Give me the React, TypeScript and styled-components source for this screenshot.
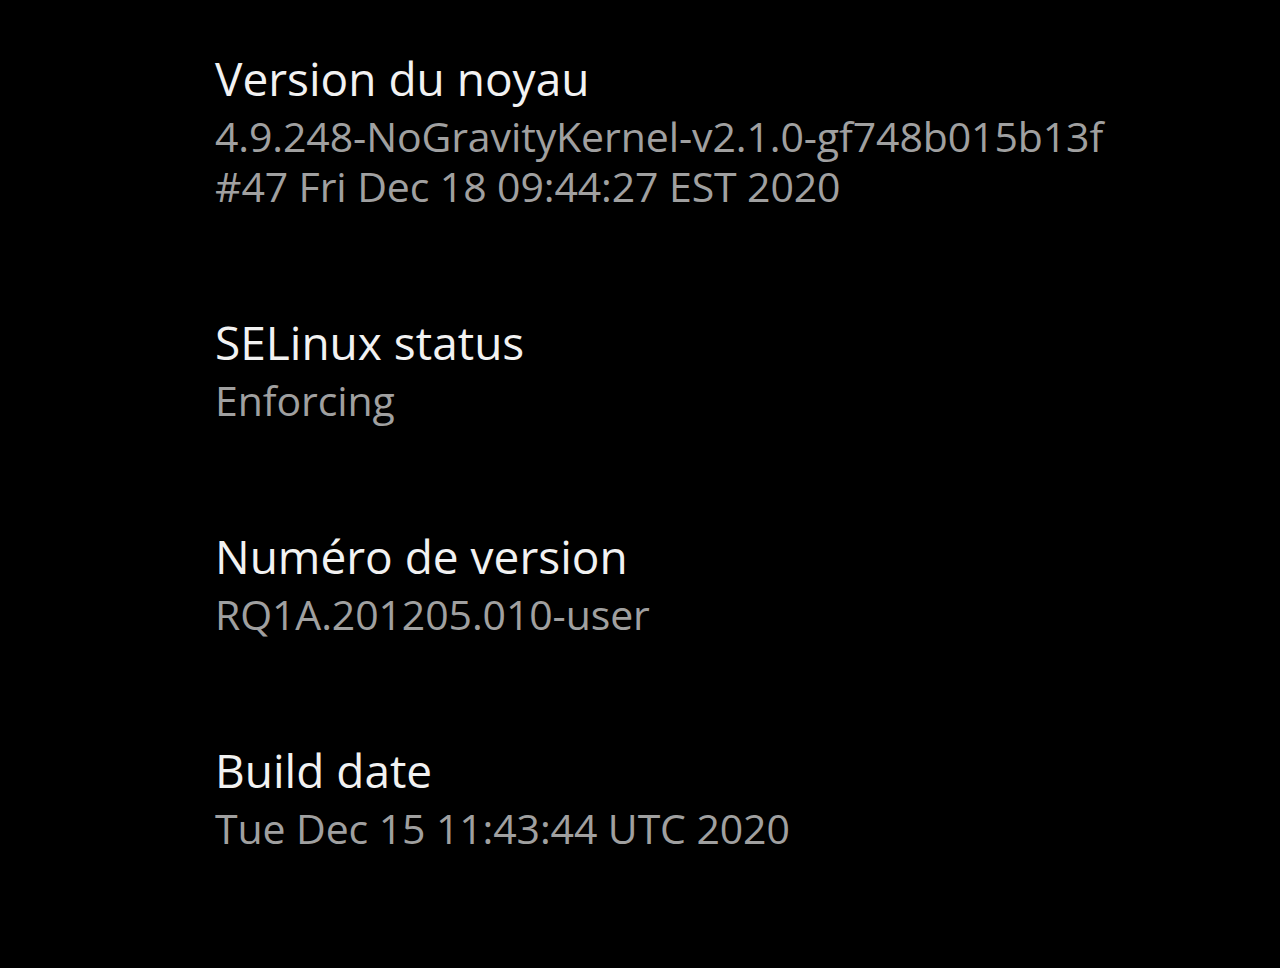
import React from 'react';
import styled, { createGlobalStyle } from 'styled-components';

interface IInfoItem {
  titre: string;
  lignes: string[];
}

const items: IInfoItem[] = [
  {
    titre: 'Version du noyau',
    lignes: ['4.9.248-NoGravityKernel-v2.1.0-gf748b015b13f', '#47 Fri Dec 18 09:44:27 EST 2020'],
  },
  { titre: 'SELinux status', lignes: ['Enforcing'] },
  { titre: 'Numéro de version', lignes: ['RQ1A.201205.010-user'] },
  { titre: 'Build date', lignes: ['Tue Dec 15 11:43:44 UTC 2020'] },
];

const GlobalStyle = createGlobalStyle`
  html, body {
    margin: 0;
    padding: 0;
    background: #000;
  }
`;

const App: React.FC = () => {
  return (
    <>
      <GlobalStyle />
      <Screen>
        <List>
          {items.map((item) => (
            <Item key={item.titre}>
              <Title>{item.titre}</Title>
              <Summary>{item.lignes.join('\n')}</Summary>
            </Item>
          ))}
        </List>
      </Screen>
    </>
  );
};

const Screen = styled.div`
  width: 1280px;
  height: 968px;
  background: #000;
  font-family: 'Open Sans', 'Noto Sans', sans-serif;
  overflow: hidden;
`;

const List = styled.ul`
  list-style: none;
  margin: 0;
  padding: 45px 0 0 215px;
  display: flex;
  flex-direction: column;
  gap: 98px;
`;

const Item = styled.li`
  display: flex;
  flex-direction: column;
`;

const Title = styled.div`
  color: #f2f2f2;
  font-size: 46px;
  line-height: 66px;
`;

const Summary = styled.div`
  color: #a0a0a0;
  font-size: 41px;
  line-height: 50px;
  letter-spacing: -0.1px;
  white-space: pre-line;
`;

export default App;
